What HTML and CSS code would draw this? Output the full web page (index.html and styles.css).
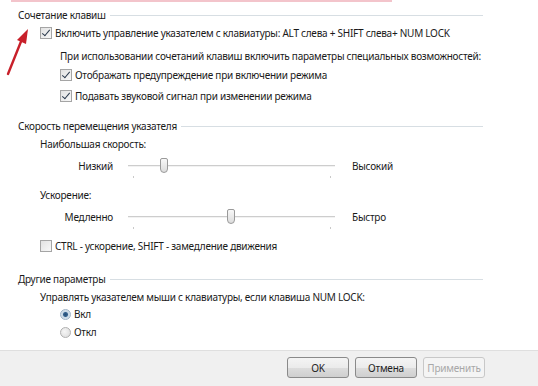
FILE: index.html
```html
<!DOCTYPE html>
<html lang="ru">
<head>
<meta charset="utf-8">
<link rel="stylesheet" href="styles.css">
</head>
<body>
<div class="window">
  <div class="topbar"></div>
  <main class="content">
    <section class="group">
      <div class="legend"><span>Сочетание клавиш</span><i></i></div>
      <div class="indent">
        <label class="row r-cb1"><span class="cb checked"></span>Включить управление указателем с клавиатуры: ALT слева + SHIFT слева+ NUM LOCK</label>
        <div class="sub">
          <div class="row r-note">При использовании сочетаний клавиш включить параметры специальных возможностей:</div>
          <label class="row r-cb2"><span class="cb checked"></span>Отображать предупреждение при включении режима</label>
          <label class="row r-cb3"><span class="cb checked"></span>Подавать звуковой сигнал при изменении режима</label>
        </div>
      </div>
    </section>

    <section class="group g2">
      <div class="legend"><span>Скорость перемещения указателя</span><i></i></div>
      <div class="indent">
        <div class="row r-cap1">Наибольшая скорость:</div>
        <div class="slider-row s1">
          <span class="s-left">Низкий</span>
          <div class="track"><span class="thumb" style="left:32px"></span><span class="tick t-l"></span><span class="tick t-r"></span></div>
          <span class="s-right">Высокий</span>
        </div>
        <div class="row r-cap2">Ускорение:</div>
        <div class="slider-row s2">
          <span class="s-left">Медленно</span>
          <div class="track"><span class="thumb" style="left:99px"></span><span class="tick t-l"></span><span class="tick t-r"></span></div>
          <span class="s-right">Быстро</span>
        </div>
        <label class="row r-cb4"><span class="cb"></span>CTRL - ускорение, SHIFT - замедление движения</label>
      </div>
    </section>

    <section class="group g3">
      <div class="legend"><span>Другие параметры</span><i></i></div>
      <div class="indent">
        <div class="row r-cap3">Управлять указателем мыши с клавиатуры, если клавиша NUM LOCK:</div>
        <div class="sub">
          <label class="row r-rad1"><span class="radio on"></span>Вкл</label>
          <label class="row r-rad2"><span class="radio"></span>Откл</label>
        </div>
      </div>
    </section>
  </main>
  <footer class="footer">
    <button class="btn">OK</button>
    <button class="btn">Отмена</button>
    <button class="btn disabled">Применить</button>
  </footer>
  <svg class="arrow" width="30" height="52" viewBox="0 0 30 52">
    <line x1="4" y1="47" x2="18" y2="12" stroke="#c8202a" stroke-width="2.4" stroke-linecap="round"/>
    <polygon points="24,2 13,13 22,17" fill="#c8202a"/>
  </svg>
</div>
</body>
</html>
```

FILE: styles.css
```css
* { box-sizing: border-box; }
html, body { margin: 0; padding: 0; background: #fff; }
body {
  font-family: "Noto Sans", "Open Sans", sans-serif;
  font-size: 10px;
  letter-spacing: -0.25px;
  color: #1a1a1a;
}
.window {
  position: relative;
  width: 538px;
  height: 386px;
  display: flex;
  flex-direction: column;
  overflow: hidden;
}
.topbar {
  height: 2px;
  margin: 0 146px 0 11px;
  background: #f3c4cb;
}
.content {
  flex: 1;
  padding: 4px 55px 0 18px;
}
.legend {
  display: flex;
  align-items: center;
  height: 18px;
  line-height: 18px;
}
.legend span {
  white-space: nowrap;
}
.legend i {
  flex: 1;
  height: 1px;
  margin-left: 4px;
  margin-top: 1px;
  background: #d7dee3;
}
.indent { padding-left: 22px; }
.sub { padding-left: 20px; }
.row {
  display: flex;
  align-items: center;
  height: 18px;
  line-height: 18px;
  white-space: nowrap;
}
.r-cb1 { margin-top: 0; }
.r-note { margin-top: 5px; }
.r-cb2 { margin-top: 1px; }
.r-cb3 { margin-top: 3px; }
.g2 { margin-top: 12px; }
.r-cap1 { margin-top: 0; }
.r-cap2 { margin-top: 9px; }
.r-cb4 { margin-top: 9px; }
.g3 { margin-top: 15px; }
.r-rad1 { margin-top: -1px; }
.r-rad2 { margin-top: 0; }

.cb {
  width: 12px;
  height: 12px;
  margin-right: 3px;
  border: 1px solid #a5a5a5;
  background: linear-gradient(135deg, #e2e2e2, #f8f8f8);
  position: relative;
  flex: none;
}
.cb.checked::after {
  content: "";
  position: absolute;
  left: 3px;
  top: 0px;
  width: 3px;
  height: 7px;
  border: solid #2b3a4d;
  border-width: 0 1.5px 1.5px 0;
  transform: rotate(40deg);
}
.radio {
  width: 11px;
  height: 11px;
  margin-right: 3px;
  border-radius: 50%;
  border: 1px solid #b0b0b0;
  background: radial-gradient(circle at 40% 40%, #f6f6f6, #d9d9d9);
  position: relative;
  flex: none;
}
.radio.on {
  border-color: #9fb4c7;
  background: radial-gradient(circle, #264f78 0, #34618d 2px, #c9d9e6 3px, #e8eef3 100%);
}

.slider-row {
  display: flex;
  align-items: center;
  height: 22px;
  margin-top: 2px;
}
.s-left {
  width: 73px;
  text-align: right;
  flex: none;
}
.track {
  position: relative;
  width: 207px;
  height: 2px;
  margin-left: 15px;
  margin-right: 17px;
  background: #cdcdcd;
  border-bottom: 1px solid #f2f2f2;
  flex: none;
}
.thumb {
  position: absolute;
  top: -7px;
  width: 8px;
  height: 15px;
  border: 1px solid #9a9a9a;
  border-radius: 2px 2px 4px 4px;
  background: linear-gradient(#f8f8f8, #dcdcdc);
}
.tick {
  position: absolute;
  top: 11px;
  width: 1px;
  height: 2px;
  background: #c9c9c9;
}
.t-l { left: 5px; }
.t-r { right: 4px; }

.footer {
  height: 36px;
  flex: none;
  background: #f0f0f0;
  border-top: 1px solid #dfdfdf;
  display: flex;
  justify-content: flex-end;
  align-items: center;
  gap: 6px;
  padding: 0 53px 2px 0;
}
.btn {
  width: 62px;
  height: 21px;
  font-family: inherit;
  font-size: 10px;
  letter-spacing: -0.2px;
  color: #1e1e1e;
  border: 1px solid #8a8a8a;
  border-radius: 3px;
  background: linear-gradient(#f4f4f4 0%, #ebebeb 50%, #dddddd 51%, #cfcfcf 100%);
  padding: 0;
}
.btn.disabled {
  color: #a8a8a8;
  border-color: #c8c8c8;
  background: #f4f4f4;
}
.arrow {
  position: absolute;
  left: 4px;
  top: 27px;
}
```
